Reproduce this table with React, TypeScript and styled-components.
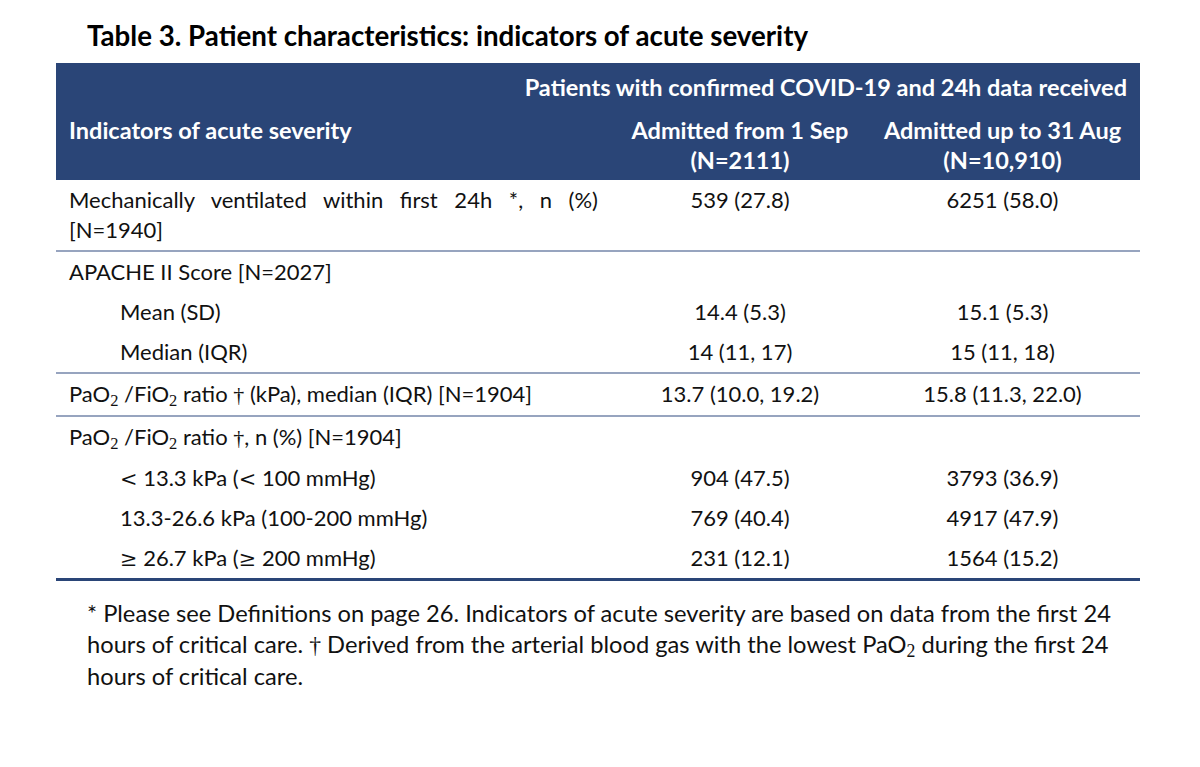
import React from "react";
import styled, { createGlobalStyle } from "styled-components";

const GlobalStyle = createGlobalStyle`
  html, body {
    margin: 0;
    padding: 0;
    background: #fff;
  }
  body {
    font-family: Lato, "Open Sans", sans-serif;
    color: #111;
  }
`;

interface BodyRow {
  label: React.ReactNode;
  a?: string;
  b?: string;
  indent?: boolean;
  rule?: boolean;
}

const Sub2 = () => <MathSub>2</MathSub>;
const PaFi = () => (
  <>
    PaO<Sub2 /> /FiO<Sub2 />
  </>
);

const buildRows = (): BodyRow[] => [
  {
    label: (
      <>
        <Justified>Mechanically ventilated within first 24h *, n (%)</Justified>
        [N=1940]
      </>
    ),
    a: "539 (27.8)",
    b: "6251 (58.0)",
    rule: true,
  },
  { label: "APACHE II Score [N=2027]" },
  { label: "Mean (SD)", a: "14.4 (5.3)", b: "15.1 (5.3)", indent: true },
  { label: "Median (IQR)", a: "14 (11, 17)", b: "15 (11, 18)", indent: true, rule: true },
  {
    label: (
      <>
        <PaFi /> ratio <Sym>†</Sym> (kPa), median (IQR) [N=1904]
      </>
    ),
    a: "13.7 (10.0, 19.2)",
    b: "15.8 (11.3, 22.0)",
    rule: true,
  },
  {
    label: (
      <>
        <PaFi /> ratio <Sym>†</Sym>, n (%) [N=1904]
      </>
    ),
  },
  {
    label: (
      <>
        <Rel>&lt;</Rel> 13.3 kPa (<Rel>&lt;</Rel> 100 mmHg)
      </>
    ),
    a: "904 (47.5)",
    b: "3793 (36.9)",
    indent: true,
  },
  { label: "13.3-26.6 kPa (100-200 mmHg)", a: "769 (40.4)", b: "4917 (47.9)", indent: true },
  {
    label: (
      <>
        <Rel>≥</Rel> 26.7 kPa (<Rel>≥</Rel> 200 mmHg)
      </>
    ),
    a: "231 (12.1)",
    b: "1564 (15.2)",
    indent: true,
  },
];

export default function App() {
  const rows = buildRows();
  return (
    <Page>
      <GlobalStyle />
      <Title>Table 3. Patient characteristics: indicators of acute severity</Title>
      <Table>
        <colgroup>
          <col style={{ width: 559 }} />
          <col style={{ width: 250 }} />
          <col style={{ width: 275 }} />
        </colgroup>
        <thead>
          <tr>
            <HeadCell colSpan={3} $align="right" $top>
              Patients with confirmed COVID-19 and 24h data received
            </HeadCell>
          </tr>
          <tr>
            <HeadCell>Indicators of acute severity</HeadCell>
            <HeadCell $align="center">
              Admitted from 1 Sep
              <br />
              (N=2111)
            </HeadCell>
            <HeadCell $align="center">
              Admitted up to 31 Aug
              <br />
              (N=10,910)
            </HeadCell>
          </tr>
        </thead>
        <tbody>
          {rows.map((r, i) => (
            <Row key={i} $rule={r.rule} $last={i === rows.length - 1}>
              <LabelCell $indent={r.indent}>{r.label}</LabelCell>
              <ValueCell>{r.a}</ValueCell>
              <ValueCell>{r.b}</ValueCell>
            </Row>
          ))}
        </tbody>
      </Table>
      <Footnote>
        * Please see Definitions on page 26. Indicators of acute severity are based on data from the first 24
        <br />
        hours of critical care. <Sym>†</Sym> Derived from the arterial blood gas with the lowest PaO<Sub2 /> during
        the first 24
        <br />
        hours of critical care.
      </Footnote>
    </Page>
  );
}

const Page = styled.div`
  width: 1200px;
  height: 767px;
  box-sizing: border-box;
  padding: 19px 0 0 56px;
  background: #fff;
`;

const Title = styled.h1`
  margin: 0 0 10px 31px;
  font-family: Lato, sans-serif;
  font-size: 27.7px;
  font-weight: 700;
  line-height: 34px;
  color: #000;
  white-space: nowrap;
`;

const Table = styled.table`
  width: 1084px;
  border-collapse: collapse;
  table-layout: fixed;
  font-size: 22px;
`;

const HeadCell = styled.th<{ $align?: string; $top?: boolean }>`
  background: #2a4577;
  color: #fff;
  font-size: 23.5px;
  font-weight: 700;
  white-space: nowrap;
  text-align: ${({ $align }) => $align || "left"};
  vertical-align: top;
  line-height: 30px;
  padding: ${({ $top }) => ($top ? "9px 13px 8px" : "5px 13px")};
`;

const Row = styled.tr<{ $rule?: boolean; $last?: boolean }>`
  border-bottom: ${({ $rule, $last }) =>
    $last ? "3px solid #2a4577" : $rule ? "2px solid #97a4bf" : "none"};
`;

const LabelCell = styled.td<{ $indent?: boolean }>`
  padding: 5px 13px 5px ${({ $indent }) => ($indent ? "64px" : "13px")};
  line-height: 30px;
  vertical-align: top;
  white-space: nowrap;
`;

const ValueCell = styled.td`
  padding: 5px 13px;
  line-height: 30px;
  text-align: center;
  vertical-align: top;
  white-space: nowrap;
`;

const Justified = styled.span`
  display: block;
  width: 529px;
  text-align: justify;
  text-align-last: justify;
`;

const MathSub = styled.sub`
  font-family: "Liberation Serif", serif;
  font-size: 0.75em;
  line-height: 0;
  vertical-align: -0.22em;
`;

const Sym = styled.span`
  font-family: "Liberation Serif", "DejaVu Serif", serif;
`;

const Rel = styled.span`
  font-family: "DejaVu Serif", "Liberation Serif", serif;
  font-size: 0.95em;
  line-height: 0;
`;

const Footnote = styled.p`
  margin: 17px 0 0 31px;
  font-size: 23.7px;
  line-height: 31px;
  white-space: nowrap;
`;
